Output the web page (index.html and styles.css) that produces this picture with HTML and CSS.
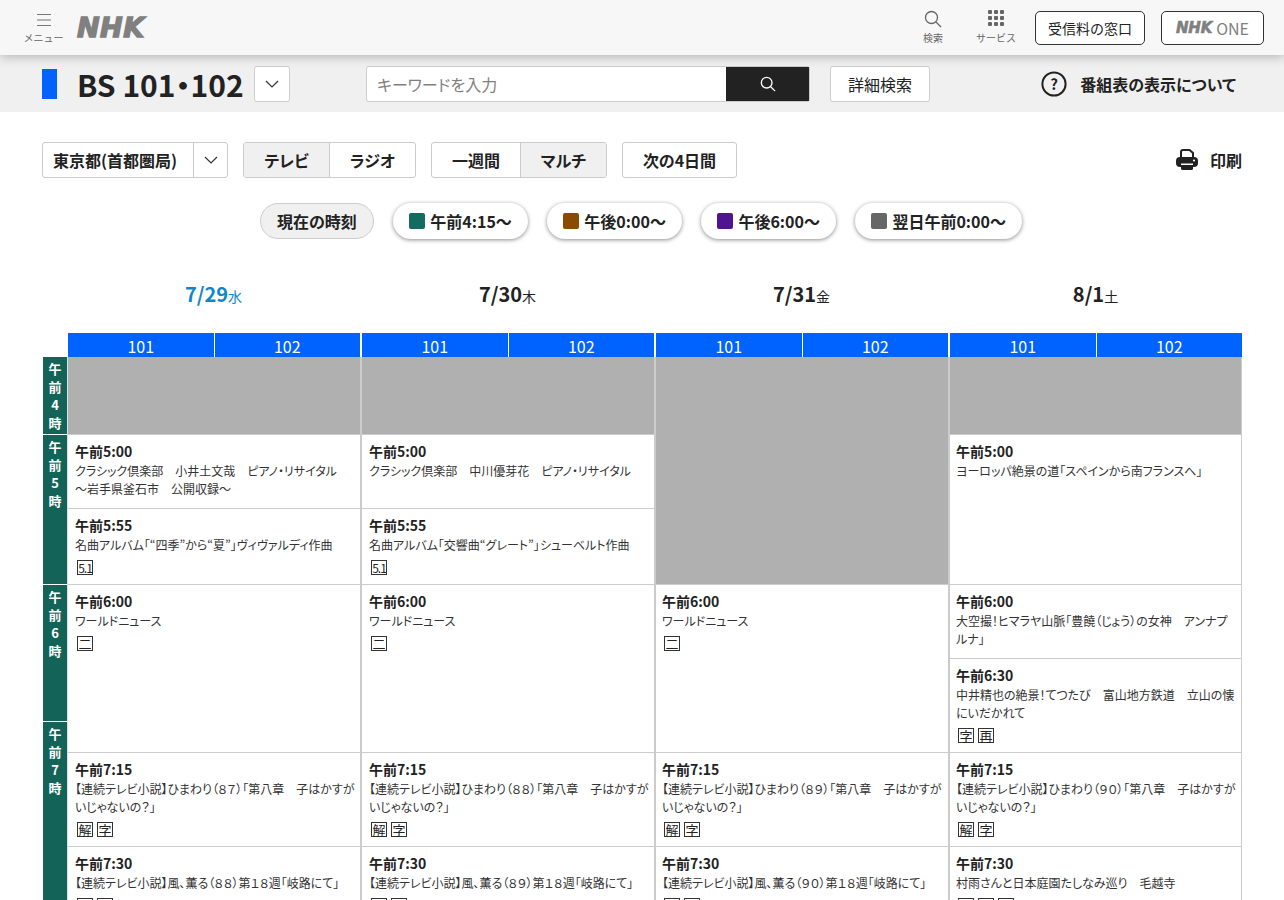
FILE: index.html
```html
<!DOCTYPE html>
<html lang="ja">
<head>
    <meta charset="UTF-8">
    <meta name="viewport" content="width=device-width, initial-scale=1.0">
    <title>番組表 BS 101・102</title>
    <link rel="stylesheet" href="styles.css">
</head>
<body>
    <header class="top-bar">
        <a class="icon-link menu-link">
            <svg class="menu-icon" viewBox="0 0 14 14" width="14" height="14"><path d="M0 1.500h14M0 7h14M0 12.500h14" stroke="#777" stroke-width="1.100" fill="none"/></svg>
            <span>メニュー</span>
        </a>
        <span class="logo">NHK</span>
        <div class="top-right">
            <a class="icon-link search-link">
                <svg viewBox="0 0 18 18" width="18" height="18"><circle cx="7.500" cy="7.500" r="6" stroke="#666" stroke-width="1.300" fill="none"/><path d="M12 12l5 5" stroke="#666" stroke-width="1.300"/></svg>
                <span>検索</span>
            </a>
            <a class="icon-link service-link">
                <svg viewBox="0 0 16 16" width="16" height="16" fill="#666"><rect x="0" y="0" width="4" height="4" rx="1"/><rect x="6" y="0" width="4" height="4" rx="1"/><rect x="12" y="0" width="4" height="4" rx="1"/><rect x="0" y="6" width="4" height="4" rx="1"/><rect x="6" y="6" width="4" height="4" rx="1"/><rect x="12" y="6" width="4" height="4" rx="1"/><rect x="0" y="12" width="4" height="4" rx="1"/><rect x="6" y="12" width="4" height="4" rx="1"/><rect x="12" y="12" width="4" height="4" rx="1"/></svg>
                <span>サービス</span>
            </a>
            <a class="top-button fee-button">受信料の窓口</a>
            <a class="top-button one-button"><span class="logo-small">NHK</span>ONE</a>
        </div>
    </header>

    <section class="sub-bar">
        <span class="channel-mark"></span>
        <h1 class="channel-title">BS 101・102</h1>
        <button class="chevron-button">
            <svg viewBox="0 0 14 8" width="14" height="8"><path d="M1 1l6 6 6-6" stroke="#333" stroke-width="1.200" fill="none"/></svg>
        </button>
        <div class="search-box">
            <span class="search-input">キーワードを入力</span>
            <span class="search-button">
                <svg viewBox="0 0 18 18" width="16" height="16"><circle cx="7.500" cy="7.500" r="6" stroke="#fff" stroke-width="1.500" fill="none"/><path d="M12 12l5 5" stroke="#fff" stroke-width="1.500"/></svg>
            </span>
        </div>
        <button class="detail-button">詳細検索</button>
        <a class="about-link">
            <svg viewBox="0 0 26 26" width="26" height="26"><circle cx="13" cy="13" r="11.600" stroke="#222" stroke-width="2" fill="none"/><text x="13" y="18.500" text-anchor="middle" class="about-mark">?</text></svg>
            番組表の表示について
        </a>
    </section>

    <main class="content">
        <div class="controls">
            <div class="area-select">
                <span class="area-name">東京都(首都圏局)</span>
                <span class="area-arrow">
                    <svg viewBox="0 0 14 8" width="14" height="8"><path d="M1 1l6 6 6-6" stroke="#333" stroke-width="1.200" fill="none"/></svg>
                </span>
            </div>
            <div class="toggle-group media-group">
                <span class="toggle is-active">テレビ</span>
                <span class="toggle">ラジオ</span>
            </div>
            <div class="toggle-group view-group">
                <span class="toggle">一週間</span>
                <span class="toggle is-active">マルチ</span>
            </div>
            <span class="next-button">次の4日間</span>
            <a class="print-link">
                <svg viewBox="0 0 22 22" width="22" height="22">
                    <path d="M5 9V3a2 2 0 0 1 2-2h6.500L17 4v5" stroke="#222" stroke-width="2" fill="#fff"/>
                    <rect x="0" y="8" width="22" height="10" rx="4" fill="#222"/>
                    <circle cx="18" cy="11.500" r="1.100" fill="#fff"/>
                    <rect x="5" y="14.500" width="12" height="1.500" fill="#fff"/>
                    <rect x="5" y="16" width="12" height="5" rx="1.500" fill="#222"/>
                </svg>
                印刷
            </a>
        </div>

        <div class="jump-row">
            <span class="pill pill-now">現在の時刻</span>
            <span class="pill"><i class="swatch swatch-morning"></i>午前4:15〜</span>
            <span class="pill"><i class="swatch swatch-noon"></i>午後0:00〜</span>
            <span class="pill"><i class="swatch swatch-evening"></i>午後6:00〜</span>
            <span class="pill"><i class="swatch swatch-night"></i>翌日午前0:00〜</span>
        </div>

        <div class="dates">
            <div class="date is-today"><b>7/29</b>水</div>
            <div class="date"><b>7/30</b>木</div>
            <div class="date"><b>7/31</b>金</div>
            <div class="date"><b>8/1</b>土</div>
        </div>

        <div class="channels">
            <div class="channel-pair"><span>101</span><span>102</span></div>
            <div class="channel-pair"><span>101</span><span>102</span></div>
            <div class="channel-pair"><span>101</span><span>102</span></div>
            <div class="channel-pair"><span>101</span><span>102</span></div>
        </div>

        <div class="schedule">
            <div class="hours">
                <div class="hour h-4">午<br>前<br>4<br>時</div>
                <div class="hour h-5">午<br>前<br>5<br>時</div>
                <div class="hour h-6">午<br>前<br>6<br>時</div>
                <div class="hour h-7">午<br>前<br>7<br>時</div>
            </div>

            <div class="day">
                <div class="cell empty len-78"></div>
                <div class="cell len-74">
                    <p class="time">午前5:00</p>
                    <p class="desc">クラシック倶楽部　小井土文哉　ピアノ・リサイタル<br>〜岩手県釜石市　公開収録〜</p>
                </div>
                <div class="cell len-76">
                    <p class="time">午前5:55</p>
                    <p class="desc">名曲アルバム「“四季”から“夏”」ヴィヴァルディ作曲</p>
                    <div class="marks"><span class="mark mark-small">5.1</span></div>
                </div>
                <div class="cell len-168">
                    <p class="time">午前6:00</p>
                    <p class="desc">ワールドニュース</p>
                    <div class="marks"><span class="mark">二</span></div>
                </div>
                <div class="cell len-94">
                    <p class="time">午前7:15</p>
                    <p class="desc">【連続テレビ小説】ひまわり（８７）「第八章　子はかすがいじゃないの？」</p>
                    <div class="marks"><span class="mark">解</span><span class="mark">字</span></div>
                </div>
                <div class="cell len-94">
                    <p class="time">午前7:30</p>
                    <p class="desc">【連続テレビ小説】風、薫る（８８）第１８週「岐路にて」</p>
                    <div class="marks"><span class="mark">解</span><span class="mark">字</span></div>
                </div>
            </div>

            <div class="day">
                <div class="cell empty len-78"></div>
                <div class="cell len-74">
                    <p class="time">午前5:00</p>
                    <p class="desc">クラシック倶楽部　中川優芽花　ピアノ・リサイタル</p>
                </div>
                <div class="cell len-76">
                    <p class="time">午前5:55</p>
                    <p class="desc">名曲アルバム「交響曲“グレート”」シューベルト作曲</p>
                    <div class="marks"><span class="mark mark-small">5.1</span></div>
                </div>
                <div class="cell len-168">
                    <p class="time">午前6:00</p>
                    <p class="desc">ワールドニュース</p>
                    <div class="marks"><span class="mark">二</span></div>
                </div>
                <div class="cell len-94">
                    <p class="time">午前7:15</p>
                    <p class="desc">【連続テレビ小説】ひまわり（８８）「第八章　子はかすがいじゃないの？」</p>
                    <div class="marks"><span class="mark">解</span><span class="mark">字</span></div>
                </div>
                <div class="cell len-94">
                    <p class="time">午前7:30</p>
                    <p class="desc">【連続テレビ小説】風、薫る（８９）第１８週「岐路にて」</p>
                    <div class="marks"><span class="mark">解</span><span class="mark">字</span></div>
                </div>
            </div>

            <div class="day">
                <div class="cell empty len-228"></div>
                <div class="cell len-168">
                    <p class="time">午前6:00</p>
                    <p class="desc">ワールドニュース</p>
                    <div class="marks"><span class="mark">二</span></div>
                </div>
                <div class="cell len-94">
                    <p class="time">午前7:15</p>
                    <p class="desc">【連続テレビ小説】ひまわり（８９）「第八章　子はかすがいじゃないの？」</p>
                    <div class="marks"><span class="mark">解</span><span class="mark">字</span></div>
                </div>
                <div class="cell len-94">
                    <p class="time">午前7:30</p>
                    <p class="desc">【連続テレビ小説】風、薫る（９０）第１８週「岐路にて」</p>
                    <div class="marks"><span class="mark">解</span><span class="mark">字</span></div>
                </div>
            </div>

            <div class="day">
                <div class="cell empty len-78"></div>
                <div class="cell len-150">
                    <p class="time">午前5:00</p>
                    <p class="desc">ヨーロッパ絶景の道「スペインから南フランスへ」</p>
                </div>
                <div class="cell len-74">
                    <p class="time">午前6:00</p>
                    <p class="desc">大空撮！ヒマラヤ山脈「豊饒（じょう）の女神　アンナプルナ」</p>
                </div>
                <div class="cell len-94">
                    <p class="time">午前6:30</p>
                    <p class="desc">中井精也の絶景！てつたび　富山地方鉄道　立山の懐にいだかれて</p>
                    <div class="marks"><span class="mark">字</span><span class="mark">再</span></div>
                </div>
                <div class="cell len-94">
                    <p class="time">午前7:15</p>
                    <p class="desc">【連続テレビ小説】ひまわり（９０）「第八章　子はかすがいじゃないの？」</p>
                    <div class="marks"><span class="mark">解</span><span class="mark">字</span></div>
                </div>
                <div class="cell len-94">
                    <p class="time">午前7:30</p>
                    <p class="desc">村雨さんと日本庭園たしなみ巡り　毛越寺</p>
                    <div class="marks"><span class="mark">字</span><span class="mark">字</span><span class="mark">再</span></div>
                </div>
            </div>
        </div>
    </main>
</body>
</html>
```

FILE: styles.css
```css
* {
    box-sizing: border-box;
}

html, body {
    height: 900px;
    overflow: hidden;
}

body {
    margin: 0;
    background-color: #fff;
    color: #222;
    font-family: 'Noto Sans CJK JP', 'Noto Sans', sans-serif;
    font-feature-settings: "palt";
}

p {
    margin: 0;
}

/* top bar */
.top-bar {
    position: relative;
    z-index: 2;
    display: flex;
    align-items: center;
    height: 55px;
    padding: 0 20px 0 24px;
    background-color: #f7f7f7;
    box-shadow: 0 2px 10px rgba(0, 0, 0, 0.25);
}

.icon-link {
    display: flex;
    flex-direction: column;
    align-items: center;
    font-feature-settings: normal;
    font-size: 10px;
    line-height: 14px;
    white-space: nowrap;
    color: #666;
}

.menu-link {
    width: 39px;
    gap: 4px;
    margin-top: 2px;
}

.logo {
    margin-left: 14px;
    font-family: 'DejaVu Sans', sans-serif;
    font-size: 27px;
    font-weight: bold;
    font-style: italic;
    letter-spacing: 0.5px;
    color: #808080;
    -webkit-text-stroke: 1.4px #808080;
}

.top-right {
    display: flex;
    align-items: center;
    margin-left: auto;
}

.search-link {
    width: 20px;
    gap: 3px;
}

.service-link {
    width: 40px;
    margin-left: 33px;
    gap: 5px;
}

.top-button {
    display: flex;
    align-items: center;
    justify-content: center;
    height: 34px;
    border: 1px solid #333;
    border-radius: 5px;
    background-color: #fff;
    font-feature-settings: normal;
    font-size: 14px;
    color: #222;
}

.fee-button {
    width: 110px;
    margin-left: 19px;
}

.one-button {
    width: 103px;
    margin-left: 16px;
    color: #808080;
    font-size: 16px;
}

.logo-small {
    margin-right: 4px;
    font-family: 'DejaVu Sans', sans-serif;
    font-size: 15px;
    font-weight: bold;
    font-style: italic;
    letter-spacing: -0.2px;
    color: #808080;
    -webkit-text-stroke: 0.6px #808080;
}

/* channel and search */
.sub-bar {
    display: flex;
    align-items: center;
    height: 57px;
    padding: 0 48px 0 42px;
    background-color: #f0f0f0;
}

.channel-mark {
    width: 15px;
    height: 30px;
    background-color: #0062ff;
}

.channel-title {
    margin: 0 0 0 20px;
    width: 177px;
    font-size: 30px;
    font-weight: bold;
    line-height: 40px;
    white-space: nowrap;
    color: #222;
}

.chevron-button {
    display: flex;
    align-items: center;
    justify-content: center;
    width: 36px;
    height: 36px;
    padding: 0;
    border: 1px solid #ccc;
    border-radius: 3px;
    background-color: #fff;
}

.search-box {
    display: flex;
    width: 444px;
    height: 36px;
    margin-left: 76px;
    border: 1px solid #ccc;
    border-radius: 3px;
    background-color: #fff;
}

.search-input {
    flex: 1;
    padding-left: 10px;
    font-size: 16px;
    line-height: 34px;
    color: #808080;
}

.search-button {
    display: flex;
    align-items: center;
    justify-content: center;
    width: 83px;
    background-color: #222;
}

.detail-button {
    width: 100px;
    height: 36px;
    margin-left: 20px;
    padding: 0;
    border: 1px solid #ccc;
    border-radius: 3px;
    background-color: #fff;
    font-family: inherit;
    font-feature-settings: inherit;
    font-size: 16px;
    color: #222;
}

.about-link {
    display: flex;
    align-items: center;
    gap: 13px;
    margin-left: auto;
    font-size: 16px;
    font-weight: bold;
}

.about-mark {
    font-size: 15px;
    font-weight: bold;
    fill: #222;
}

/* page body */
.content {
    padding: 30px 42px 0 43px;
}

.controls {
    display: flex;
    align-items: center;
    height: 36px;
}

.area-select {
    display: flex;
    width: 186px;
    height: 36px;
    margin-left: -1px;
    border: 1px solid #ccc;
    border-radius: 3px;
    font-size: 16px;
    font-weight: bold;
    line-height: 34px;
}

.area-name {
    width: 151px;
    padding-left: 10px;
    border-right: 1px solid #ccc;
}

.area-arrow {
    display: flex;
    flex: 1;
    align-items: center;
    justify-content: center;
}

.toggle-group {
    display: flex;
    height: 36px;
    border: 1px solid #ccc;
    border-radius: 3px;
    overflow: hidden;
}

.media-group {
    width: 173px;
    margin-left: 15px;
}

.view-group {
    width: 176px;
    margin-left: 15px;
}

.toggle {
    flex: 1;
    font-size: 16px;
    font-weight: bold;
    line-height: 34px;
    text-align: center;
}

.view-group .toggle:first-child {
    flex: none;
    width: 88px;
}

.toggle + .toggle {
    border-left: 1px solid #ccc;
}

.is-active {
    background-color: #f0f0f0;
}

.next-button {
    width: 115px;
    height: 36px;
    margin-left: 15px;
    border: 1px solid #ccc;
    border-radius: 3px;
    font-size: 16px;
    font-weight: bold;
    line-height: 34px;
    text-align: center;
}

.print-link {
    display: flex;
    align-items: center;
    gap: 12px;
    margin-left: auto;
    font-size: 16px;
    font-weight: bold;
}

.jump-row {
    display: flex;
    justify-content: center;
    gap: 19.5px;
    margin: 25px 3px 0 0;
}

.pill {
    display: flex;
    align-items: center;
    gap: 5px;
    height: 36px;
    padding: 0 16px;
    border-radius: 18px;
    background-color: #fff;
    box-shadow: 0 1px 4px rgba(0, 0, 0, 0.45);
    font-size: 16px;
    font-weight: bold;
}

.pill-now {
    border: 1px solid #ccc;
    background-color: #f0f0f0;
    box-shadow: none;
}

.swatch {
    width: 16px;
    height: 16px;
    border-radius: 2px;
}

.swatch-morning { background-color: #146b5f; }
.swatch-noon { background-color: #8a4b00; }
.swatch-evening { background-color: #4f1490; }
.swatch-night { background-color: #666; }

.dates {
    display: flex;
    margin: 36px 0 0 25px;
}

.date {
    flex: none;
    width: 294px;
    height: 58px;
    padding-right: 3px;
    font-size: 14px;
    line-height: 38px;
    text-align: center;
    color: #222;
}

.date b {
    font-size: 20px;
}

.is-today {
    color: #0d87c9;
}

.channels {
    display: flex;
    margin-left: 25px;
}

.channel-pair {
    display: flex;
    flex: none;
    width: 294px;
    height: 24px;
    padding-right: 2px;
}

.channel-pair span {
    flex: 1;
    background-color: #0062ff;
    color: #fff;
    font-size: 16px;
    line-height: 26px;
    text-align: center;
}

.channel-pair span + span {
    border-left: 1px solid #fff;
}

/* program table */
.schedule {
    display: flex;
}

.hours {
    flex: none;
    width: 25px;
    border-right: 1px solid #d3e4e4;
}

.hour {
    padding-top: 3px;
    border-bottom: 1px solid #fff;
    background-color: #146358;
    color: #fff;
    font-size: 13px;
    font-weight: bold;
    line-height: 18px;
    text-align: center;
}

.h-4 { height: 78px; }
.h-5 { height: 150px; }
.h-6 { height: 137px; }
.h-7 { height: 179px; }

.day {
    flex: none;
    width: 294px;
    border-right: 2px solid #ccc;
}

.day:last-child {
    width: 292px;
    border-right-width: 1px;
}

.cell {
    padding: 5px 5px 0 7px;
    border-bottom: 1px solid #ccc;
    overflow: hidden;
}

.day:nth-child(n+4) .cell {
    padding-left: 6px;
}

.empty {
    background-color: #b0b0b0;
}

.len-74 { height: 74px; }
.len-76 { height: 76px; }
.len-78 { height: 78px; }
.len-94 { height: 94px; }
.len-150 { height: 150px; }
.len-168 { height: 168px; }
.len-228 { height: 228px; }

.time {
    font-size: 14px;
    font-weight: bold;
    line-height: 22px;
    color: #222;
}

.desc {
    font-size: 12px;
    line-height: 18px;
    color: #333;
}

.marks {
    display: flex;
    gap: 4px;
    margin: 6px 0 0 2px;
}

.mark {
    width: 16px;
    height: 15px;
    border: 1px solid #333;
    font-size: 13px;
    line-height: 13px;
    text-align: center;
}

.mark-small {
    font-size: 12px;
    letter-spacing: -1px;
}
```
